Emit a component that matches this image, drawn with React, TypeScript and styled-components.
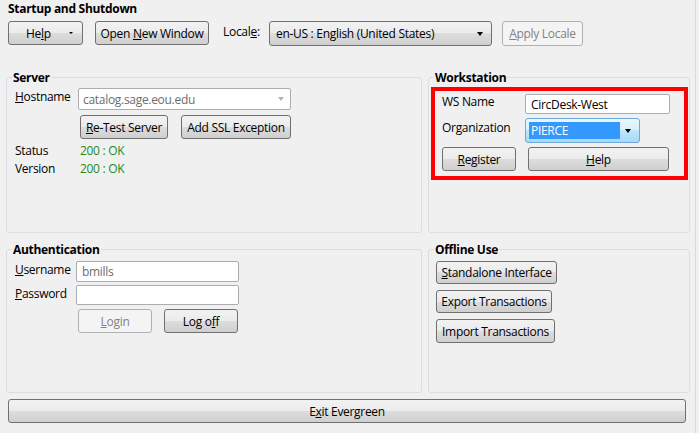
import styled, { createGlobalStyle, css } from "styled-components";

const GlobalStyle = createGlobalStyle`
  html, body {
    margin: 0;
    padding: 0;
    background: #f0f0f0;
  }
  body {
    font-family: "Open Sans", "Noto Sans", sans-serif;
    font-size: 12px;
    line-height: 15px;
    letter-spacing: -0.3px;
    color: #000;
  }
`;

const Window = styled.div`
  box-sizing: border-box;
  width: 696px;
  height: 433px;
  padding: 1px 0 0 0;
  border-right: 1px solid #d9d9d9;
`;

const SectionTitle = styled.div`
  font-weight: bold;
  padding-left: 8px;
`;

const Toolbar = styled.div`
  display: flex;
  align-items: flex-start;
  margin-top: 5px;
  padding-left: 8px;
`;

const Button = styled.button<{ $w?: number; $h?: number; $ml?: number }>`
  box-sizing: border-box;
  display: inline-flex;
  align-items: center;
  justify-content: center;
  width: ${({ $w }) => ($w ? `${$w}px` : "auto")};
  height: ${({ $h }) => $h ?? 24}px;
  margin: 0 0 0 ${({ $ml }) => $ml ?? 0}px;
  padding: 0 6px;
  border: 1px solid #707070;
  border-radius: 3px;
  background: linear-gradient(#f2f2f2 0%, #ebebeb 50%, #dddddd 50%, #cfcfcf 100%);
  font: inherit;
  letter-spacing: inherit;
  color: #000;
  white-space: nowrap;

  &:disabled {
    border-color: #adb2b5;
    background: #f4f4f4;
    color: #838383;
  }
`;

const HelpMenuButton = styled(Button)`
  justify-content: flex-start;
  padding-left: 17px;
  gap: 18px;
`;

const Arrow = styled.span<{ $color?: string }>`
  display: inline-block;
  width: 0;
  height: 0;
  border-left: 3.5px solid transparent;
  border-right: 3.5px solid transparent;
  border-top: 4px solid ${({ $color }) => $color ?? "#000"};
`;

const SmallArrow = styled.span`
  display: inline-block;
  width: 0;
  height: 0;
  border-left: 2px solid transparent;
  border-right: 2px solid transparent;
  border-top: 2px solid #000;
`;

const ToolbarLabel = styled.label`
  width: 46px;
  margin: 3px 0 0 14px;
`;

const SelectBox = styled.div<{ $w: number; $h?: number; $focused?: boolean }>`
  box-sizing: border-box;
  display: flex;
  align-items: center;
  justify-content: space-between;
  width: ${({ $w }) => $w}px;
  height: ${({ $h }) => $h ?? 25}px;
  padding: 0 8px 0 6px;
  border: 1px solid #707070;
  border-radius: 3px;
  background: linear-gradient(#f2f2f2 0%, #ebebeb 50%, #dddddd 50%, #cfcfcf 100%);
  ${({ $focused }) =>
    $focused &&
    css`
      padding: 0 8px 0 3px;
      border-color: #6fa8dc;
      background: linear-gradient(#eaf6fd 0%, #d9f0fc 50%, #bee6fd 50%, #a7d9f5 100%);
    `}
`;

const Highlight = styled.span`
  display: flex;
  align-items: center;
  width: 91px;
  height: 17px;
  padding-left: 2px;
  box-sizing: border-box;
  background: #3399ff;
  color: #fff;
`;

const ComboBox = styled.div`
  box-sizing: border-box;
  display: flex;
  align-items: center;
  justify-content: space-between;
  width: 213px;
  height: 22px;
  padding: 0 6px 0 4px;
  border: 1px solid #abadb3;
  border-radius: 2px;
  background: #fff;
  color: #6d6d6d;
`;

const TextInput = styled.div<{ $w: number; $h?: number; $muted?: boolean }>`
  box-sizing: border-box;
  display: flex;
  align-items: center;
  width: ${({ $w }) => $w}px;
  height: ${({ $h }) => $h ?? 20}px;
  padding: 0 5px;
  border: 1px solid #abadb3;
  border-radius: 2px;
  background: #fff;
  color: ${({ $muted }) => ($muted ? "#6d6d6d" : "#000")};
`;

const Groups = styled.div`
  display: grid;
  grid-template-columns: 416px 262px;
  grid-template-rows: 163px 151px;
  column-gap: 6px;
  row-gap: 9px;
  margin: 24px 0 0 6px;
`;

const GroupBox = styled.fieldset`
  box-sizing: border-box;
  margin: 0;
  min-width: 0;
  padding: 0;
  border: 1px solid #d5dfe5;
  border-radius: 3px;
`;

const Legend = styled.legend`
  margin-left: 5px;
  padding: 0 1px;
  font-weight: bold;
  line-height: 15px;
`;

const GroupBody = styled.div<{ $pad?: string }>`
  padding: ${({ $pad }) => $pad ?? "3px 8px 0 8px"};
`;

const FormRow = styled.div<{ $mt?: number; $labelW: number }>`
  display: grid;
  grid-template-columns: ${({ $labelW }) => $labelW}px auto;
  align-items: start;
  margin-top: ${({ $mt }) => $mt ?? 0}px;
`;

const FieldLabel = styled.label<{ $pt?: number }>`
  padding-top: ${({ $pt }) => $pt ?? 1}px;
`;

const ButtonRow = styled.div<{ $indent?: number; $mt?: number; $gap?: number }>`
  display: flex;
  gap: ${({ $gap }) => $gap ?? 12}px;
  margin-top: ${({ $mt }) => $mt ?? 0}px;
  padding-left: ${({ $indent }) => $indent ?? 0}px;
`;

const InfoRow = styled.div<{ $mt?: number }>`
  display: grid;
  grid-template-columns: 65px auto;
  line-height: 18px;
  margin-top: ${({ $mt }) => $mt ?? 0}px;
`;

const OkValue = styled.span`
  color: #1f8a1f;
`;

const Callout = styled.div`
  box-sizing: border-box;
  height: 93px;
  padding: 3px 4px 0 7px;
  border: 4px solid #ff0000;
`;

const ButtonStack = styled.div`
  display: flex;
  flex-direction: column;
  align-items: flex-start;
  gap: 6px;
  padding: 4px 0 0 7px;
`;

const ExitBar = styled.div`
  padding: 6px 0 0 8px;
`;

export default function App() {
  return (
    <>
      <GlobalStyle />
      <Window>
        <SectionTitle>Startup and Shutdown</SectionTitle>
        <Toolbar>
          <HelpMenuButton $w={75}>
            <span>
              He<u>l</u>p
            </span>
            <SmallArrow />
          </HelpMenuButton>
          <Button $w={114} $ml={12}>
            Open&nbsp;<u>N</u>ew Window
          </Button>
          <ToolbarLabel>
            Local<u>e</u>:
          </ToolbarLabel>
          <SelectBox $w={223}>
            <span>en-US : English (United States)</span>
            <Arrow />
          </SelectBox>
          <Button $w={81} $h={25} $ml={10} disabled>
            <u>A</u>pply Locale
          </Button>
        </Toolbar>

        <Groups>
          <GroupBox>
            <Legend>Server</Legend>
            <GroupBody>
              <FormRow $labelW={63}>
                <FieldLabel>
                  <u>H</u>ostname
                </FieldLabel>
                <ComboBox>
                  <span>catalog.sage.eou.edu</span>
                  <Arrow $color="#b5b5b5" />
                </ComboBox>
              </FormRow>
              <ButtonRow $indent={65} $mt={5} $gap={13}>
                <Button $w={88}>
                  <u>R</u>e-Test Server
                </Button>
                <Button $w={110}>Add SSL Exception</Button>
              </ButtonRow>
              <InfoRow $mt={3}>
                <span>Status</span>
                <OkValue>200 : OK</OkValue>
              </InfoRow>
              <InfoRow>
                <span>Version</span>
                <OkValue>200 : OK</OkValue>
              </InfoRow>
            </GroupBody>
          </GroupBox>

          <GroupBox>
            <Legend>Workstation</Legend>
            <GroupBody $pad="2px 1px 0 2px">
              <Callout>
                <FormRow $labelW={83}>
                  <FieldLabel $pt={0}>WS Name</FieldLabel>
                  <TextInput $w={145}>CircDesk-West</TextInput>
                </FormRow>
                <FormRow $labelW={83} $mt={4}>
                  <FieldLabel $pt={2}>Organization</FieldLabel>
                  <SelectBox $w={115} $focused>
                    <Highlight>PIERCE</Highlight>
                    <Arrow />
                  </SelectBox>
                </FormRow>
                <ButtonRow $mt={4}>
                  <Button $w={74}>
                    <u>R</u>egister
                  </Button>
                  <Button $w={141}>
                    <u>H</u>elp
                  </Button>
                </ButtonRow>
              </Callout>
            </GroupBody>
          </GroupBox>

          <GroupBox>
            <Legend>Authentication</Legend>
            <GroupBody>
              <FormRow $labelW={61} $mt={1}>
                <FieldLabel>
                  <u>U</u>sername
                </FieldLabel>
                <TextInput $w={163} $h={21} $muted>
                  bmills
                </TextInput>
              </FormRow>
              <FormRow $labelW={61} $mt={3}>
                <FieldLabel>
                  <u>P</u>assword
                </FieldLabel>
                <TextInput $w={163} />
              </FormRow>
              <ButtonRow $indent={63} $mt={4} $gap={12}>
                <Button $w={74} disabled>
                  <u>L</u>ogin
                </Button>
                <Button $w={74}>
                  Log o<u>f</u>f
                </Button>
              </ButtonRow>
            </GroupBody>
          </GroupBox>

          <GroupBox>
            <Legend>Offline Use</Legend>
            <ButtonStack>
              <Button $w={121} $h={23}>
                <u>S</u>tandalone Interface
              </Button>
              <Button $w={116} $h={23}>
                Export Transactions
              </Button>
              <Button $w={119} $h={24}>
                Import Transactions
              </Button>
            </ButtonStack>
          </GroupBox>
        </Groups>

        <ExitBar>
          <Button $w={678}>
            E<u>x</u>it Evergreen
          </Button>
        </ExitBar>
      </Window>
    </>
  );
}
